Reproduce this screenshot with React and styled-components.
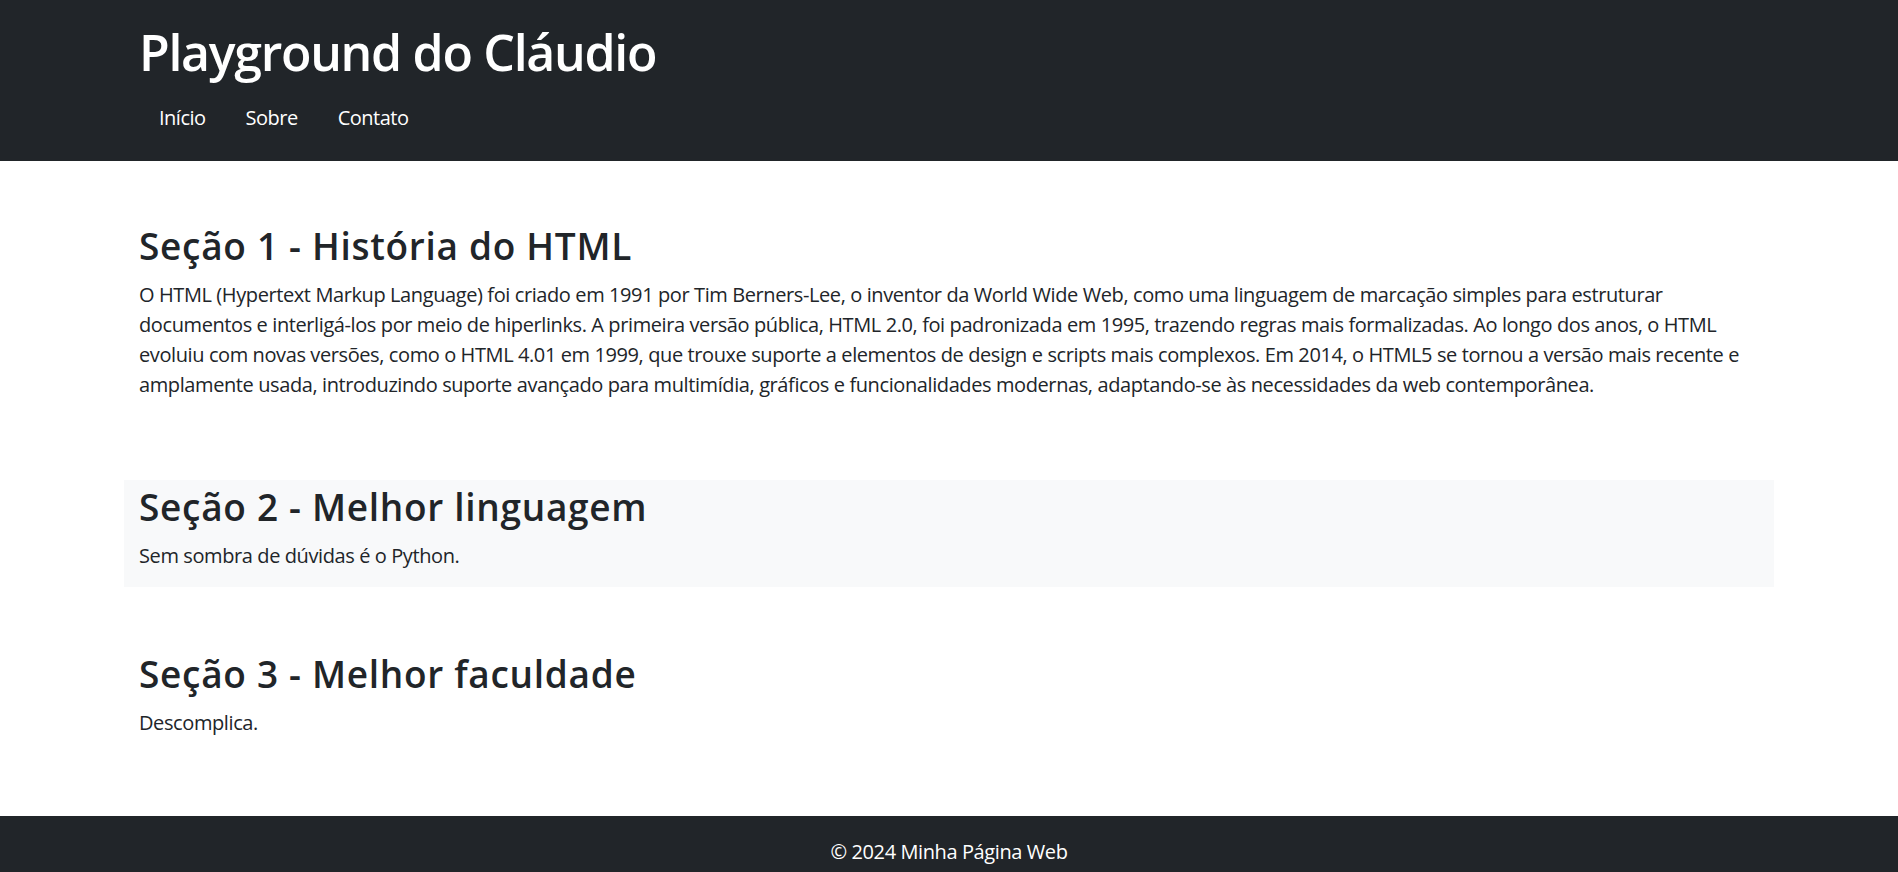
import React from "react";
import styled, { createGlobalStyle } from "styled-components";

const GlobalStyle = createGlobalStyle`
  *, *::before, *::after { box-sizing: border-box; }
  body {
    margin: 0;
    font-family: "Open Sans", "Noto Sans", sans-serif;
    font-size: 20px;
    line-height: 1.5;
    color: #212529;
    background: #fff;
  }
`;

const Header = styled.header`
  background: #212529;
  color: #fff;
  padding: 22px 0 18px;
`;

const Container = styled.div`
  width: 1650px;
  margin: 0 auto;
  padding: 0 15px;
`;

const Title = styled.h1`
  margin: 0 0 11px;
  font-size: 50px;
  font-weight: 600;
  line-height: 60px;
  letter-spacing: -1.3px;
`;

const NavList = styled.ul`
  display: flex;
  list-style: none;
  margin: 0;
  padding: 0;
`;

const NavLink = styled.a`
  display: block;
  padding: 10px 20px;
  color: #fff;
  text-decoration: none;
  font-size: 20px;
  line-height: 30px;
  letter-spacing: -0.5px;
`;

const Main = styled.main`
  display: flex;
  flex-direction: column;
  gap: 64px;
  padding: 64px 0 62px;
`;

const Section = styled(Container)`
  display: flow-root;
  margin-top: ${(p) => p.$shift || 0}px;
  padding-top: ${(p) => (p.$light ? "6px" : "0")};
  background: ${(p) => (p.$light ? "#f8f9fa" : "transparent")};
`;

const Heading = styled.h3`
  margin: 0 0 13px;
  font-size: 37px;
  font-weight: 600;
  line-height: 42px;
  letter-spacing: 0.7px;
`;

const Text = styled.p`
  margin: 0 0 16px;
  font-size: 20px;
  line-height: 30px;
  letter-spacing: -0.4px;
`;

const Footer = styled.footer`
  background: #212529;
  color: #fff;
  text-align: center;
  padding: 21px 0 20px;
  font-size: 20px;
  line-height: 30px;
  letter-spacing: -0.4px;
`;

const navItems = ["Início", "Sobre", "Contato"];

export default function App() {
  return (
    <>
      <GlobalStyle />
      <Header>
        <Container>
          <Title>Playground do Cláudio</Title>
          <nav>
            <NavList>
              {navItems.map((item) => (
                <li key={item}>
                  <NavLink href="#">{item}</NavLink>
                </li>
              ))}
            </NavList>
          </nav>
        </Container>
      </Header>
      <Main>
        <Section as="section">
          <Heading>Seção 1 - História do HTML</Heading>
          <Text>
            O HTML (Hypertext Markup Language) foi criado em 1991 por Tim Berners-Lee, o inventor da World Wide Web, como uma linguagem de marcação simples para estruturar documentos e interligá-los por meio de hiperlinks. A primeira versão pública, HTML 2.0, foi padronizada em 1995, trazendo regras mais formalizadas. Ao longo dos anos, o HTML evoluiu com novas versões, como o HTML 4.01 em 1999, que trouxe suporte a elementos de design e scripts mais complexos. Em 2014, o HTML5 se tornou a versão mais recente e amplamente usada, introduzindo suporte avançado para multimídia, gráficos e funcionalidades modernas, adaptando-se às necessidades da web contemporânea.
          </Text>
        </Section>
        <Section as="section" $light>
          <Heading>Seção 2 - Melhor linguagem</Heading>
          <Text>Sem sombra de dúvidas é o Python.</Text>
        </Section>
        <Section as="section" $shift={2}>
          <Heading>Seção 3 - Melhor faculdade</Heading>
          <Text>Descomplica.</Text>
        </Section>
      </Main>
      <Footer>© 2024 Minha Página Web</Footer>
    </>
  );
}
